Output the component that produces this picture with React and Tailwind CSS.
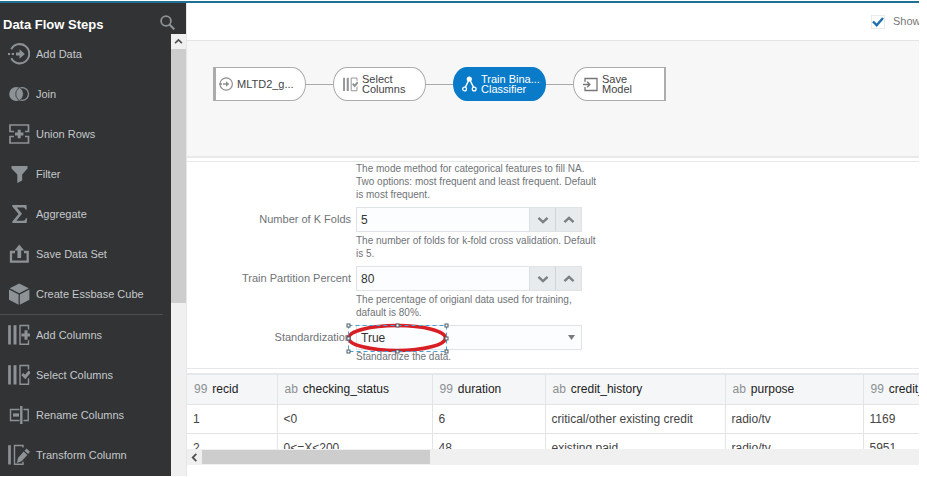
import React from "react";

const iconProps = {
  width: 22,
  height: 22,
  viewBox: "0 0 22 22",
  fill: "none",
  stroke: "currentColor",
  "aria-hidden": true,
};

function AddDataIcon() {
  return (
    <svg {...iconProps}>
      <path d="M3.2 6.2A9.6 9.6 0 1 1 3.2 15.3" strokeWidth="2" />
      <path d="M0 11h2M3.800 11h2.200" strokeWidth="2.200" />
      <path d="M8 11h5" strokeWidth="3" />
      <path d="M11.500 6.300 16.800 11 11.500 15.700z" fill="currentColor" stroke="none" />
    </svg>
  );
}

function JoinIcon() {
  return (
    <svg {...iconProps}>
      <circle cx="8.2" cy="11" r="7" fill="currentColor" stroke="none" />
      <circle cx="14.2" cy="11" r="7" fill="#313335" stroke="none" />
      <circle cx="14.2" cy="11" r="6.3" strokeWidth="1.3" />
      <path d="M11.6 4.600a7.400 7.400 0 0 1 0 12.800a7.400 7.400 0 0 1 0-12.800z" fill="currentColor" stroke="#313335" strokeWidth="0.6" />
    </svg>
  );
}

function UnionIcon() {
  return (
    <svg {...iconProps}>
      <path d="M6 8.500H2V2h18.500v6.500H17M6 13.500H2V20h18.500v-6.500H17" strokeWidth="1.700" />
      <path d="M11.200 6.800v8.400M7 11h8.400" strokeWidth="3" />
    </svg>
  );
}

function FilterIcon() {
  return (
    <svg {...iconProps}>
      <path d="M3.500 3h16v2.500l-5.300 6v6L9.300 20v-8.500L3.500 5.500z" fill="currentColor" stroke="none" />
    </svg>
  );
}

function SumIcon() {
  return (
    <svg {...iconProps}>
      <path d="M4.300 2H18.500l.3 4.600h-1.400c-.4-1.700-1-2.100-2.800-2.100H8.800l5.200 6.300-5.600 6.900h6.400c1.900 0 2.500-.6 3-2.400h1.400L18.600 20H4.300v-1.400l6.300-7.600-6.300-7.600z" fill="currentColor" stroke="none" />
    </svg>
  );
}

function SaveIcon() {
  return (
    <svg {...iconProps}>
      <path d="M7 9H3v9.700h16.700V9H16" strokeWidth="2.300" />
      <path d="M11.300 15V6" strokeWidth="3.800" />
      <path d="M6.400 7.400 11.300 1.600 16.200 7.400z" fill="currentColor" stroke="none" />
    </svg>
  );
}

function CubeIcon() {
  return (
    <svg {...iconProps}>
      <path d="M11.200 0.500 20.800 5.200 11.200 10.200 1.700 5.200zM1 6.400l9.600 5v10.300L1 16.700zM21.400 6.400l-9.600 5v10.300l9.600-5z" fill="currentColor" stroke="none" />
    </svg>
  );
}

function ColumnsBase() {
  return (
    <>
      <path d="M1.500 1.200v19.300" strokeWidth="2.700" />
      <path d="M7 1.200v19.300" strokeWidth="3" />
    </>
  );
}

function AddColumnsIcon() {
  return (
    <svg {...iconProps}>
      <ColumnsBase />
      <path d="M20.500 5.500V1.500h-8.500v18.700h8.500v-4" strokeWidth="1.400" />
      <path d="M18 6.300v9.400M13.400 11H22" strokeWidth="3" />
    </svg>
  );
}

function SelectColumnsIcon({ size = 22 }) {
  return (
    <svg {...iconProps} width={size} height={size}>
      <ColumnsBase />
      <path d="M20.500 5.500V1.500h-8.500v18.700h8.500v-6" strokeWidth="1.400" />
      <path d="m14.300 10 2.900 3 4.600-5.500" strokeWidth="3" />
    </svg>
  );
}

function RenameIcon() {
  return (
    <svg {...iconProps}>
      <path d="M11.500 5.500H2.500v11h9M15.500 5.500h4.700v11h-4.700" strokeWidth="1.400" />
      <path d="M5 11h6" strokeWidth="3.200" />
      <path d="M13.300 2v18" strokeWidth="2.400" />
    </svg>
  );
}

function TransformIcon() {
  return (
    <svg {...iconProps}>
      <path d="M1.500 1.200v19.300" strokeWidth="2.700" />
      <path d="M15 3.500V1.500H6.500v18.700H15v-2.500" strokeWidth="1.400" />
      <path d="m18.500 4.600 3.500 3.200-1.900 2.200-3.600-3.300zM15.700 7.600l3.600 3.300-5.700 6.400-4.800 1.800 1.200-5z" fill="currentColor" stroke="none" />
    </svg>
  );
}

function SourceIcon() {
  return (
    <svg width="14" height="14" viewBox="0 0 14 14" fill="none" stroke="currentColor" aria-hidden>
      <circle cx="7.200" cy="7" r="6.200" strokeWidth="1.200" />
      <path d="M0 7h3M4 7h4" strokeWidth="1.300" />
      <path d="M7 4.200 10.300 7 7 9.800z" fill="currentColor" stroke="none" />
    </svg>
  );
}

function SaveModelIcon() {
  return (
    <svg width="15" height="15" viewBox="0 0 15 15" fill="none" stroke="currentColor" aria-hidden>
      <path d="M2 5V1.500h12v12H2V10" strokeWidth="1.300" />
      <path d="M0 7.500h6.500M4.200 4.800 6.900 7.500 4.200 10.200" strokeWidth="1.300" />
    </svg>
  );
}

function ModelIcon() {
  return (
    <svg width="15" height="16" viewBox="0 0 15 16" fill="none" stroke="currentColor" aria-hidden>
      <path d="M7.300 3 3 12M7.300 3l4.700 9" strokeWidth="1.500" />
      <circle cx="7.300" cy="3" r="2.600" fill="currentColor" stroke="none" />
      <circle cx="2.600" cy="13" r="1.900" fill="#0a7bc9" strokeWidth="1.300" />
      <circle cx="12.200" cy="13" r="1.900" fill="#0a7bc9" strokeWidth="1.300" />
    </svg>
  );
}

function Chevron({ d, size = 12, weight = 2 }) {
  return (
    <svg width={size} height={size} viewBox="0 0 10 10" fill="none" stroke="currentColor" strokeWidth={weight} aria-hidden>
      <path d={d} />
    </svg>
  );
}

const UP = "M1.200 6.800L5 3.200l3.800 3.600";
const DOWN = "M1.200 3.200L5 6.800l3.800-3.600";
const LEFT = "M7 1L3 5l4 4";

const dataSteps = [
  ["Add Data", AddDataIcon],
  ["Join", JoinIcon],
  ["Union Rows", UnionIcon],
  ["Filter", FilterIcon],
  ["Aggregate", SumIcon],
  ["Save Data Set", SaveIcon],
  ["Create Essbase Cube", CubeIcon],
];

const columnSteps = [
  ["Add Columns", AddColumnsIcon],
  ["Select Columns", SelectColumnsIcon],
  ["Rename Columns", RenameIcon],
  ["Transform Column", TransformIcon],
];

function StepList({ steps }) {
  return (
    <ul>
      {steps.map(([name, Icon]) => (
        <li key={name}>
          <button type="button" className="flex h-10 w-full items-center gap-1.5 pl-2 text-left text-[#c6c8ca]">
            <span className="text-[#8d9296]"><Icon /></span>
            {name}
          </button>
        </li>
      ))}
    </ul>
  );
}

function Sidebar() {
  return (
    <aside className="flex w-[186px] shrink-0 flex-col bg-[#313335] text-[11px]">
      <header className="flex h-[31px] shrink-0 items-end justify-between pr-[11px] pl-[3px]">
        <h1 className="text-[13px] leading-[18px] font-bold text-white">Data Flow Steps</h1>
        <button type="button" aria-label="Search steps" className="pb-1 text-[#8d9296]">
          <svg width="15" height="15" viewBox="0 0 15 15" fill="none" stroke="currentColor" aria-hidden>
            <circle cx="6" cy="6" r="4.900" strokeWidth="1.800" />
            <path d="m9.500 9.500 4.800 4.800" strokeWidth="2.200" />
          </svg>
        </button>
      </header>
      <div className="flex min-h-0 flex-1">
        <nav className="min-w-0 flex-1 overflow-hidden" aria-label="Data flow steps">
          <StepList steps={dataSteps} />
          <hr className="mr-2 border-[#4c4e50]" />
          <StepList steps={columnSteps} />
        </nav>
        <div className="flex w-[15px] flex-col bg-[#f0f0f0]">
          <button type="button" aria-label="Scroll up" className="flex h-[15px] items-center justify-center text-[#505050]">
            <Chevron d={UP} size={9} weight={1.8} />
          </button>
          <div className="h-[254px] bg-[#cdcdcd]" />
        </div>
      </div>
    </aside>
  );
}

function Node({ icon, lines, shape }) {
  return (
    <button type="button" className={"flex h-[34px] w-[93px] shrink-0 items-center gap-1 text-left text-[11px] leading-[10px] " + shape}>
      {icon}
      <span>
        {lines.map((line) => (
          <span key={line} className="block whitespace-nowrap">{line}</span>
        ))}
      </span>
    </button>
  );
}

function Connector() {
  return <div className="h-px w-[27px] shrink-0 bg-[#a9a9a9]" />;
}

function Flow() {
  return (
    <section aria-label="Data flow" className="flex h-[118px] shrink-0 items-start border-t border-b-2 border-t-[#e4e4e4] border-b-[#e9e9e9] bg-[#f7f7f7] pt-[26px] pl-[26px]">
      <div className="flex items-center">
        <Node
          icon={<span className="text-[#8f8f8f]"><SourceIcon /></span>}
          lines={["MLTD2_g..."]}
          shape="rounded-r-[14px_17px] border border-l-3 border-[#aaacae] bg-white pl-[3px] text-[#444]"
        />
        <Connector />
        <Node
          icon={<span className="text-[#8f9297]"><SelectColumnsIcon size={15} /></span>}
          lines={["Select", "Columns"]}
          shape="rounded-[14px/17px] border border-[#aaacae] bg-white pl-[9px] text-[#444]"
        />
        <Connector />
        <Node
          icon={<ModelIcon />}
          lines={["Train Bina...", "Classifier"]}
          shape="rounded-[14px/17px] bg-[#0a7bc9] pl-[9px] text-white"
        />
        <Connector />
        <Node
          icon={<span className="text-[#777]"><SaveModelIcon /></span>}
          lines={["Save", "Model"]}
          shape="rounded-l-[14px_17px] border border-r-2 border-[#aaacae] bg-white pl-[9px] text-[#444]"
        />
      </div>
    </section>
  );
}

const labelClass = "w-[164px] shrink-0 text-right text-[11px] leading-[25px] whitespace-nowrap text-[#6f7377]";
const helpClass = "text-[10px] leading-[13px] whitespace-pre text-[#6f7377]";

function NumberField({ id, label, value, help }) {
  return (
    <div className="flex gap-[5px]">
      <label htmlFor={id} className={labelClass}>{label}</label>
      <div className="w-[226px]">
        <div className="flex h-[25px] border border-[#dfe3e7]">
          <input id={id} defaultValue={value} className="min-w-0 flex-1 bg-[#fcfdfe] pl-1 text-xs text-[#333] outline-none" />
          <button type="button" aria-label={"Decrease " + label} className="flex w-[26px] items-center justify-center border-l border-[#dce0e3] bg-[#e7ebee] text-[#7c8083]">
            <Chevron d={DOWN} />
          </button>
          <button type="button" aria-label={"Increase " + label} className="flex w-[26px] items-center justify-center border-l border-[#cfd4d8] bg-[#e7ebee] text-[#7c8083]">
            <Chevron d={UP} />
          </button>
        </div>
        <p className={"pt-0.5 " + helpClass}>{help}</p>
      </div>
    </div>
  );
}

function Highlight() {
  const xs = [1, 50, 99];
  const ys = [1, 14, 27];
  return (
    <svg className="pointer-events-none absolute -top-px -left-[9px] overflow-visible" width="101" height="29" viewBox="0 0 101 29" fill="none" aria-hidden>
      <ellipse cx="50" cy="14" rx="48.500" ry="12.500" stroke="#d91f26" strokeWidth="3.600" />
      <rect x="1.500" y="1.500" width="98" height="26" stroke="#4a9fd0" strokeDasharray="4 3" />
      {xs.map((x) =>
        ys.map((y) =>
          x === 50 && y === 14 ? null : (
            <rect key={x + "-" + y} x={x - 1} y={y - 1} width="3" height="3" fill="#fff" stroke="#4d5a66" />
          )
        )
      )}
    </svg>
  );
}

function Settings() {
  return (
    <form className="flex shrink-0 flex-col gap-1.5 border-y border-[#e6e8ea] pb-[5px]">
      <p className={"ml-[169px] " + helpClass}>
        {"The mode method for categorical features to fill NA.\nTwo options: most frequent and least frequent. Default\nis most frequent."}
      </p>
      <NumberField id="folds" label="Number of K Folds" value="5" help={"The number of folds for k-fold cross validation. Default\nis 5."} />
      <NumberField id="partition" label="Train Partition Percent" value="80" help={"The percentage of origianl data used for training,\ndafault is 80%."} />
      <div className="flex gap-[5px]">
        <label htmlFor="standardization" className={labelClass}>Standardization</label>
        <div className="relative w-[226px]">
          <select id="standardization" defaultValue="True" className="block h-[25px] w-full appearance-none border border-[#dfe3e7] bg-[#fcfdfe] pl-1 text-xs text-[#333] outline-none">
            <option>True</option>
            <option>False</option>
          </select>
          <svg className="pointer-events-none absolute top-[10px] right-[7px]" width="7" height="5" viewBox="0 0 7 5" aria-hidden>
            <path d="M0 0h7L3.500 5z" fill="#777b7e" />
          </svg>
          <Highlight />
          <p className={helpClass}>Standardize the data.</p>
        </div>
      </div>
    </form>
  );
}

const columns = [
  ["99", "recid", "w-[90px]"],
  ["ab", "checking_status", "w-[155px]"],
  ["99", "duration", "w-[113px]"],
  ["ab", "credit_history", "w-[180px]"],
  ["ab", "purpose", "w-[138px]"],
  ["99", "credit_amount", "w-[138px]"],
];

const rows = [
  ["1", "<0", "6", "critical/other existing credit", "radio/tv", "1169"],
  ["2", "0<=X<200", "48", "existing paid", "radio/tv", "5951"],
];

function DataTable() {
  return (
    <section aria-label="Data preview" className="mt-1 shrink-0">
      <div className="h-[76px] overflow-hidden border-t-2 border-[#e6e7e9]">
        <table className="w-[814px] table-fixed border-collapse text-left text-xs whitespace-nowrap">
          <thead>
            <tr className="h-[29px] bg-[#f5f6f7]">
              {columns.map(([type, name, width]) => (
                <th key={name} scope="col" className={"border-r border-b border-[#e2e4e6] px-[7px] font-normal text-[#222] " + width}>
                  <span className="mr-[5px] text-[#8b8f93]">{type}</span>
                  {name}
                </th>
              ))}
            </tr>
          </thead>
          <tbody>
            {rows.map((row) => (
              <tr key={row[0]} className="h-[29px]">
                {row.map((cell, i) => (
                  <td key={i} className="border-r border-b border-[#e2e4e6] px-1.5 text-[#444]">{cell}</td>
                ))}
              </tr>
            ))}
          </tbody>
        </table>
      </div>
      <div className="flex h-4 bg-[#f0f0f0]">
        <button type="button" aria-label="Scroll left" className="flex w-[15px] items-center justify-center text-[#505050]">
          <Chevron d={LEFT} size={9} />
        </button>
        <div className="my-px w-[228px] bg-[#cdcdcd]" />
      </div>
    </section>
  );
}

export default function App() {
  return (
    <div className="h-screen overflow-hidden bg-white pt-px pr-2 pb-px font-['Liberation_Sans',Arial,sans-serif]">
      <div className="flex h-full flex-col border-t-2 border-[#1f7096]">
        <div className="flex min-h-0 flex-1">
          <Sidebar />
          <main className="flex min-w-0 flex-1 flex-col overflow-hidden border-l border-[#e6e6e6]">
            <div className="flex h-[37px] shrink-0 items-center justify-end overflow-hidden">
              <label className="flex items-center gap-2 text-[11px] text-[#777]">
                <span className="relative block size-[14px]">
                  <input type="checkbox" defaultChecked className="block size-[14px] appearance-none border border-[#e8ebee] bg-white" />
                  <svg className="pointer-events-none absolute inset-0" width="14" height="14" viewBox="0 0 14 14" fill="none" stroke="#1c6fb0" strokeWidth="2.400" aria-hidden>
                    <path d="m2 6.500 3.700 3.700L12 3" />
                  </svg>
                </span>
                <span className="w-[26px] overflow-hidden">Show</span>
              </label>
            </div>
            <Flow />
            <div className="h-[3px] shrink-0" />
            <Settings />
            <DataTable />
          </main>
        </div>
      </div>
    </div>
  );
}
